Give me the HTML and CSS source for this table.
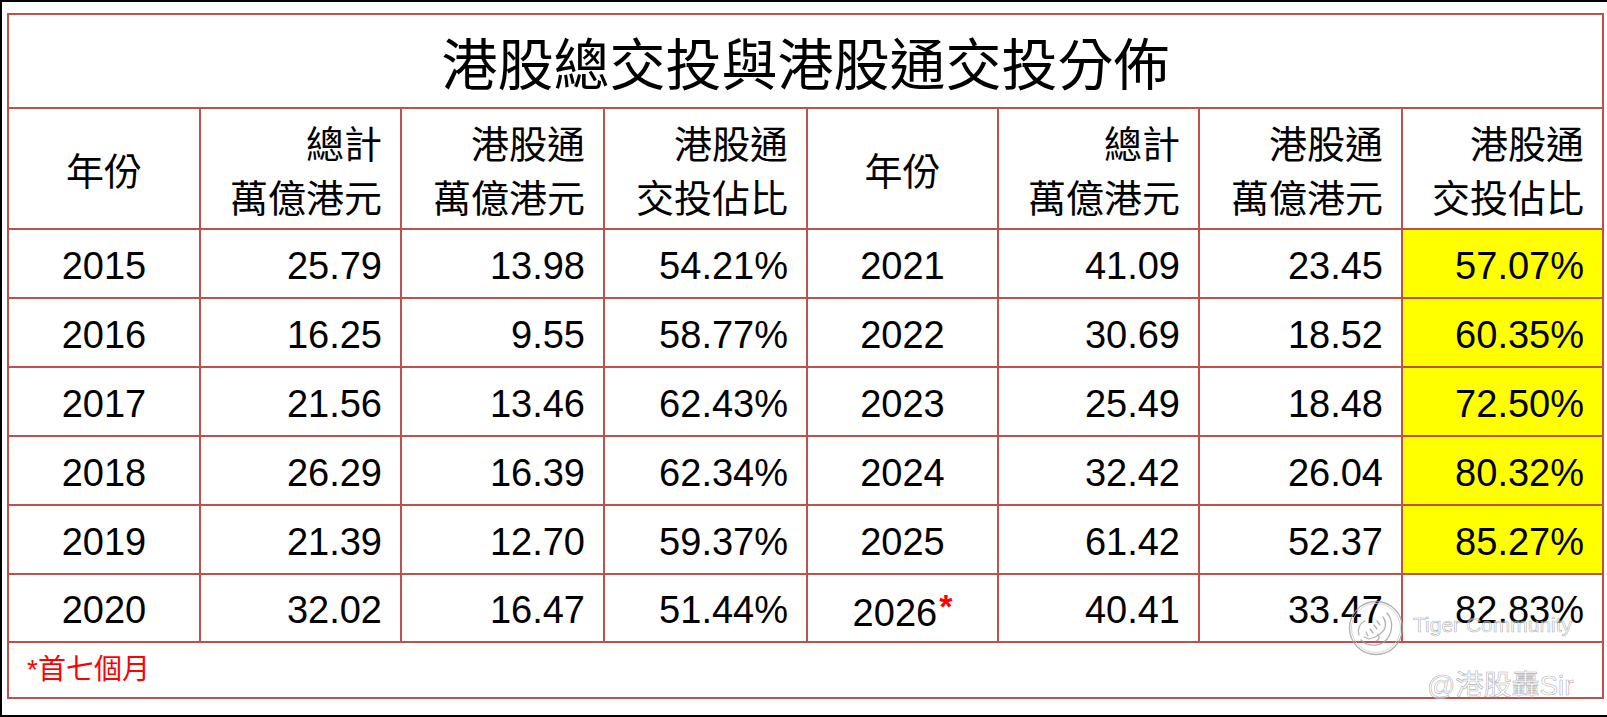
FILE: index.html
```html
<!DOCTYPE html>
<html lang="zh-Hant">
<head>
<meta charset="utf-8">
<title>港股總交投與港股通交投分佈</title>
<link rel="stylesheet" href="styles.css">
</head>
<body>
<div class="frame">
  <table class="sheet">
    <colgroup>
      <col class="c-year1"><col class="c-n"><col class="c-n2"><col class="c-n2">
      <col class="c-year2"><col class="c-n"><col class="c-n2"><col class="c-n">
    </colgroup>
    <tr class="r-title"><th colspan="8" class="title">港股總交投與港股通交投分佈</th></tr>
    <tr class="r-head">
      <th class="ctr">年份</th>
      <th class="rt">總計<br>萬億港元</th>
      <th class="rt">港股通<br>萬億港元</th>
      <th class="rt">港股通<br>交投佔比</th>
      <th class="ctr">年份</th>
      <th class="rt">總計<br>萬億港元</th>
      <th class="rt">港股通<br>萬億港元</th>
      <th class="rt">港股通<br>交投佔比</th>
    </tr>
    <tr class="r-data"><td class="ctr">2015</td><td class="rt">25.79</td><td class="rt">13.98</td><td class="rt">54.21%</td><td class="ctr">2021</td><td class="rt">41.09</td><td class="rt">23.45</td><td class="rt hl">57.07%</td></tr>
    <tr class="r-data"><td class="ctr">2016</td><td class="rt">16.25</td><td class="rt">9.55</td><td class="rt">58.77%</td><td class="ctr">2022</td><td class="rt">30.69</td><td class="rt">18.52</td><td class="rt hl">60.35%</td></tr>
    <tr class="r-data"><td class="ctr">2017</td><td class="rt">21.56</td><td class="rt">13.46</td><td class="rt">62.43%</td><td class="ctr">2023</td><td class="rt">25.49</td><td class="rt">18.48</td><td class="rt hl">72.50%</td></tr>
    <tr class="r-data"><td class="ctr">2018</td><td class="rt">26.29</td><td class="rt">16.39</td><td class="rt">62.34%</td><td class="ctr">2024</td><td class="rt">32.42</td><td class="rt">26.04</td><td class="rt hl">80.32%</td></tr>
    <tr class="r-data"><td class="ctr">2019</td><td class="rt">21.39</td><td class="rt">12.70</td><td class="rt">59.37%</td><td class="ctr">2025</td><td class="rt">61.42</td><td class="rt">52.37</td><td class="rt hl">85.27%</td></tr>
    <tr class="r-last"><td class="ctr">2020</td><td class="rt">32.02</td><td class="rt">16.47</td><td class="rt">51.44%</td><td class="ctr">2026<span class="star">*</span></td><td class="rt">40.41</td><td class="rt">33.47</td><td class="rt">82.83%</td></tr>
    <tr class="r-foot"><td colspan="8" class="note">*首七個月</td></tr>
  </table>

  <div class="wm-logo">
    <svg width="58" height="58" viewBox="0 0 58 58" fill="none" stroke="#a0a0a0" stroke-width="1.3" stroke-linecap="round" stroke-linejoin="round">
      <circle cx="29" cy="29" r="26.5"/>
      <circle cx="29" cy="29" r="24.5" stroke="#d0d0d0" stroke-width="1"/>
      <path d="M40 14 C47 22 46 36 37 43 C30 48 20 47 14 41"/>
      <path d="M12 36 C10 30 13 24 18 22"/>
      <path d="M36 18 C39 22 39 27 37 31 L33 35 L28 38 L22 40 L17 38"/>
      <path d="M30 22 L33 26 M27 26 L30 30 M23 30 L26 34 M19 33 L21 37"/>
      <path d="M31 35 C33 38 32 41 29 42"/>
    </svg>
  </div>
  <div class="wm-brand">Tiger Community</div>
  <div class="wm-user">@港股轟Sir</div>
</div>
</body>
</html>
```

FILE: styles.css
```css
html, body {
  margin: 0;
  padding: 0;
  background: #ffffff;
}

.frame {
  position: relative;
  box-sizing: border-box;
  width: 1607px;
  height: 717px;
  border-top: 2px solid #000;
  border-left: 2px solid #000;
  border-bottom: 2px solid #000;
  padding: 11px 0 0 5px;
  background: #ffffff;
  font-family: "Liberation Sans", "Noto Sans CJK TC", "Noto Sans CJK JP", sans-serif;
  color: #000;
}

.sheet {
  border-collapse: collapse;
  table-layout: fixed;
  width: 1597px;
  font-size: 38px;
}

.c-year1 { width: 192px; }
.c-year2 { width: 191px; }
.c-n { width: 201px; }
.c-n2 { width: 203px; }

.sheet th,
.sheet td {
  border: 2px solid #c0504d;
  padding: 0 18px;
  font-weight: normal;
  white-space: nowrap;
  overflow: visible;
}

.r-title { height: 94px; }
.r-head { height: 121px; }
.r-data { height: 69px; }
.r-last { height: 68px; }
.r-foot { height: 56px; }

.title {
  text-align: center;
  font-family: "Noto Sans CJK TC", "Noto Sans CJK JP", sans-serif;
  font-size: 56px;
  font-weight: 300;
  line-height: 1;
  padding-top: 2px;
}

.r-head th {
  line-height: 54px;
  font-family: "Noto Sans CJK TC", "Noto Sans CJK JP", sans-serif;
}

.ctr { text-align: center; }
.rt { text-align: right; }

.r-data td,
.r-last td {
  line-height: 1;
  padding-top: 4px;
}

.hl { background: #ffff00; }

.star {
  color: #ff0000;
  font-weight: bold;
  font-size: 34px;
  vertical-align: 8px;
  margin-left: 2px;
}

.note {
  text-align: left;
  color: #ff0000;
  font-size: 28px;
  line-height: 1;
  padding-left: 16px;
  padding-top: 2px;
  font-family: "Liberation Sans", "Noto Sans CJK TC", sans-serif;
}

.wm-logo {
  position: absolute;
  left: 1345px;
  top: 597px;
  width: 58px;
  height: 58px;
  opacity: 0.8;
}

.wm-brand {
  position: absolute;
  left: 1411px;
  top: 611px;
  font-family: "Liberation Sans", sans-serif;
  font-size: 21px;
  color: rgba(255, 255, 255, 0.5);
  -webkit-text-stroke: 0.6px rgba(140, 140, 140, 0.7);
  white-space: nowrap;
}

.wm-user {
  position: absolute;
  left: 1425px;
  top: 661px;
  font-family: "Liberation Sans", "Noto Sans CJK TC", sans-serif;
  font-size: 28px;
  color: rgba(255, 255, 255, 0.5);
  -webkit-text-stroke: 0.6px rgba(140, 140, 140, 0.7);
  white-space: nowrap;
}
```
